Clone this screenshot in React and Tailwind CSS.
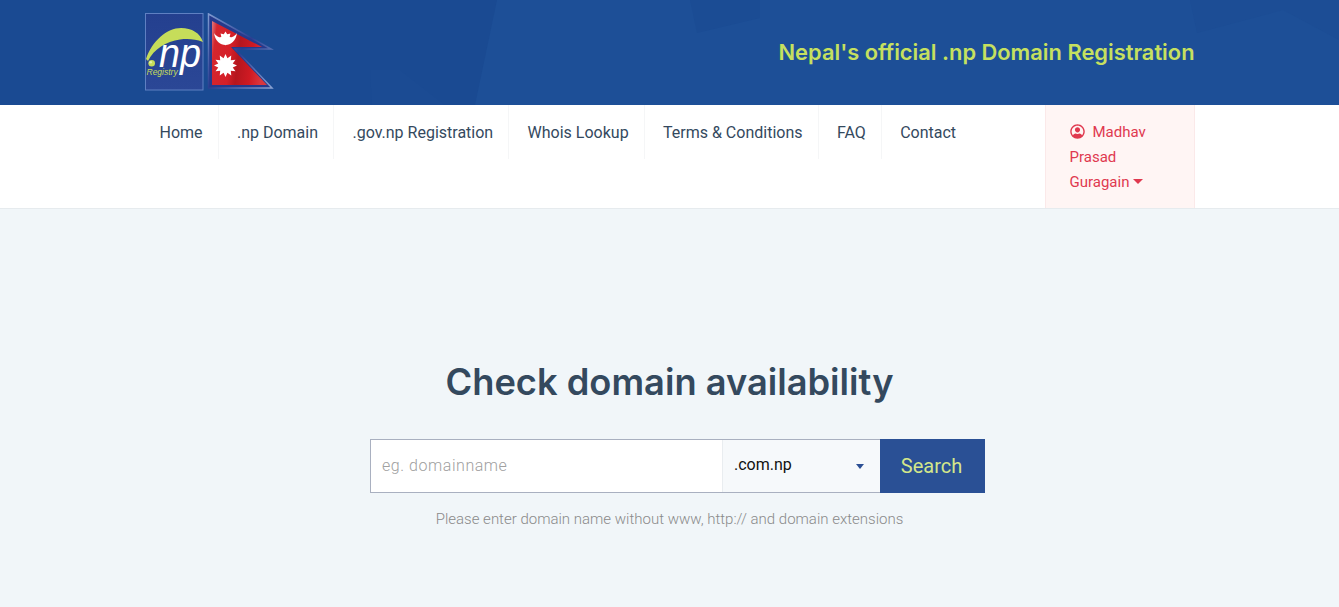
import React from "react";

const nav = ["Home", ".np Domain", ".gov.np Registration", "Whois Lookup", "Terms & Conditions", "FAQ"];

function sunPoints(cx, cy, R, r, n) {
  const pts = [];
  for (let i = 0; i < n * 2; i++) {
    const rad = i % 2 === 0 ? R : r;
    const a = (Math.PI * i) / n - Math.PI / 2;
    pts.push((cx + rad * Math.cos(a)).toFixed(2) + "," + (cy + rad * Math.sin(a)).toFixed(2));
  }
  return pts.join(" ");
}

function Logo() {
  return (
    <svg width="130" height="79" viewBox="0 0 130 79" className="block">
      <defs>
        <linearGradient id="flagShine" x1="0" x2="1" y1="0" y2="0.15">
          <stop offset="0" stopColor="#e07a80" />
          <stop offset="0.1" stopColor="#d4262e" />
          <stop offset="0.4" stopColor="#d61f28" />
          <stop offset="0.55" stopColor="#b5161e" />
          <stop offset="0.8" stopColor="#d01a23" />
          <stop offset="1" stopColor="#d9363e" />
        </linearGradient>
        <linearGradient id="npBox" x1="0" x2="0" y1="0" y2="1">
          <stop offset="0" stopColor="#24408f" />
          <stop offset="1" stopColor="#2b4796" />
        </linearGradient>
        <linearGradient id="flagEdge" x1="0" x2="1" y1="0" y2="1">
          <stop offset="0" stopColor="#7f9ad0" />
          <stop offset="0.5" stopColor="#2a3f92" />
          <stop offset="1" stopColor="#8aa2d2" />
        </linearGradient>
      </defs>
      <rect x="0.5" y="0.5" width="57.500" height="76.500" fill="url(#npBox)" stroke="#5f80c2" />
      <path d="M1 46 C7 28 22 15 36 15 C47 15 55 20 58 29 C50 26 43 25.500 35 26.500 C21 28.500 9 36 3 48 Z" fill="#c6dd5a" />
      <circle cx="6.700" cy="50.300" r="3.300" fill="#c6dd5a" />
      <circle cx="5.700" cy="49.300" r="1.300" fill="#e6f2a8" />
      <text x="14" y="54" textLength="42" lengthAdjust="spacingAndGlyphs" fontFamily="Liberation Sans, sans-serif" fontStyle="italic" fontSize="40" fill="#ffffff">np</text>
      <text x="1.500" y="62" fontFamily="Liberation Sans, sans-serif" fontStyle="italic" fontSize="8.500" fill="#c6dd5a">Registry</text>
      <path d="M63.500 1 L126 36 L90 36 L127 75 L63.500 75 Z" fill="#263a8c" stroke="url(#flagEdge)" strokeWidth="1.500" />
      <path d="M67 8 L117 34 L86 34 L122 72 L67 72 Z" fill="url(#flagShine)" />
      <path d="M69 20 C71 36 90 36 92 20 C88 27 73 27 69 20 Z" fill="#fff" />
      <polygon points={sunPoints(80.500, 25.500, 7, 4.500, 8)} fill="#fff" />
      <polygon points={sunPoints(80.500, 52.500, 11.500, 7.500, 12)} fill="#fff" />
    </svg>
  );
}

function HeaderBg() {
  return (
    <svg className="absolute inset-0 w-full h-full" viewBox="0 0 1339 105" preserveAspectRatio="none" aria-hidden="true">
      <path d="M497 0 L1339 0 L1339 105 L475 105 Z" fill="#1d4f97" />
      <path d="M370 70 L400 70 L445 105 L372 105 Z" fill="#1b4b93" />
      <path d="M690 0 L760 0 L760 18 L697 33 Z" fill="#1b4c94" />
      <path d="M1190 0 L1339 0 L1339 40 L1283 10 L1197 33 Z" fill="#1c4d95" />
    </svg>
  );
}

export default function App() {
  return (
    <div className="min-h-[607px] bg-[#f1f6f9] font-['Roboto',sans-serif]">
      <header className="relative h-[105px] bg-[#1a4a92] overflow-hidden">
        <HeaderBg />
        <div className="relative w-[1050px] mx-auto h-full flex items-start justify-between">
          <div className="pt-[13px]"><Logo /></div>
          <h2 className="mt-[37px] text-[21.85px] leading-[30px] font-semibold text-[#c6e05f] font-['Inter',sans-serif]">
            Nepal's official .np Domain Registration
          </h2>
        </div>
      </header>

      <nav className="h-[104px] bg-white border-b border-[#e6ebee]">
        <div className="w-[1050px] mx-auto h-full flex justify-between items-start">
          <ul className="flex gap-[3.4px]">
            {nav.map((n) => (
              <li key={n}>
                <a className="block px-[15px] h-[54px] leading-[55px] text-[16px] text-[#34495e] border-r border-[#f5f6f7]">{n}</a>
              </li>
            ))}
            <li>
              <a className="block px-[15px] h-[54px] leading-[55px] text-[16px] text-[#34495e]">Contact</a>
            </li>
          </ul>
          <div className="w-[150px] h-[103px] bg-[#fff5f4] border-x border-[#fbe9e9] px-[24px] pt-[15px] text-[15px] leading-[25px] text-[#e0394f]">
            <span className="inline-block align-[-2px] mr-[8px]">
              <svg width="15" height="15" viewBox="0 0 512 512" fill="currentColor">
                <path d="M256 8C119 8 8 119 8 256s111 248 248 248 248-111 248-248S393 8 256 8zm0 48c110.500 0 200 89.500 200 200 0 49-17.600 93.800-46.800 128.600-17-31.800-50.300-56.600-89.200-56.600-8 0-15.500 2.500-27 6-14 4.500-24 6-37 6s-23-1.500-37-6c-11.500-3.500-19-6-27-6-38.900 0-72.200 24.800-89.200 56.600C73.600 349.800 56 305 56 256 56 145.500 145.500 56 256 56zm0 56c-48.600 0-88 39.400-88 88s39.400 88 88 88 88-39.400 88-88-39.400-88-88-88z" />
              </svg>
            </span>
            Madhav Prasad Guragain
            <span className="inline-block ml-[4px] align-[3px] border-x-[5px] border-t-[5px] border-x-transparent border-t-[#e0394f]" />
          </div>
        </div>
      </nav>

      <main className="flex flex-col items-center">
        <h1 className="mt-[148px] text-[36.25px] leading-[50px] font-semibold text-[#34495e] font-['Inter',sans-serif]">Check domain availability</h1>
        <form className="mt-[32px] ml-[16px] flex w-[615px] h-[54px]">
          <div className="flex flex-1 border border-[#a9b0c0] border-r-0">
            <input
              placeholder="eg. domainname"
              className="w-[351px] h-full bg-white px-[11px] pb-[2px] text-[16px] font-light tracking-[0.55px] placeholder:text-[#a0a0a0] outline-none"
            />
            <div className="flex-1 border-l border-[#e9edf0] bg-[#f6f9fb] pl-[11px] pr-[16px] pb-[2px] flex items-center justify-between text-[16px] text-[#111]">
              <span>.com.np</span>
              <span className="mt-[2px] border-x-[4.5px] border-t-[5px] border-x-transparent border-t-[#2b4f94]" />
            </div>
          </div>
          <button type="button" className="w-[105px] h-full bg-[#2a5095] text-[#d4e78a] text-[20px] pr-[2px]">Search</button>
        </form>
        <p className="mt-[16px] text-[15px] leading-[20px] font-light text-[#8a8a8a]">Please enter domain name without www, http:// and domain extensions</p>
      </main>
    </div>
  );
}
